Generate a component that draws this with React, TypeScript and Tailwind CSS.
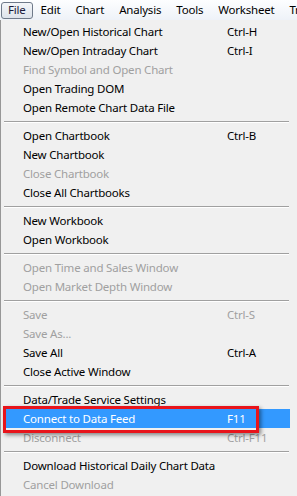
import React from 'react'

type Item = { label: string; shortcut?: string; disabled?: boolean; active?: boolean } | 'sep'

const MENU: Item[] = [
  { label: 'New/Open Historical Chart', shortcut: 'Ctrl-H' },
  { label: 'New/Open Intraday Chart', shortcut: 'Ctrl-I' },
  { label: 'Find Symbol and Open Chart', disabled: true },
  { label: 'Open Trading DOM' },
  { label: 'Open Remote Chart Data File' },
  'sep',
  { label: 'Open Chartbook', shortcut: 'Ctrl-B' },
  { label: 'New Chartbook' },
  { label: 'Close Chartbook', disabled: true },
  { label: 'Close All Chartbooks' },
  'sep',
  { label: 'New Workbook' },
  { label: 'Open Workbook' },
  'sep',
  { label: 'Open Time and Sales Window', disabled: true },
  { label: 'Open Market Depth Window', disabled: true },
  'sep',
  { label: 'Save', shortcut: 'Ctrl-S', disabled: true },
  { label: 'Save As...', disabled: true },
  { label: 'Save All', shortcut: 'Ctrl-A' },
  { label: 'Close Active Window' },
  'sep',
  { label: 'Data/Trade Service Settings' },
  { label: 'Connect to Data Feed', shortcut: 'F11', active: true },
  { label: 'Disconnect', shortcut: 'Ctrl-F11', disabled: true },
  'sep',
  { label: 'Download Historical Daily Chart Data' },
  { label: 'Cancel Download', disabled: true },
]

const BAR = ['File', 'Edit', 'Chart', 'Analysis', 'Tools', 'Worksheet', 'Trade']

export default function App() {
  return (
    <div
      className="relative w-[297px] h-[496px] overflow-hidden bg-[#f0f0f0] text-[11.5px] tracking-[-0.2px] text-black"
      style={{ fontFamily: '"Noto Sans", "Open Sans", sans-serif' }}
    >
      {/* menu bar */}
      <div className="h-[20px] flex items-center pl-[1px] bg-gradient-to-b from-[#fdfeff] to-[#eef2f8] whitespace-nowrap">
        {BAR.map((b, i) => (
          <div
            key={b}
            className={
              'h-[17px] shrink-0 flex items-center px-[6px] mr-[1px] leading-none ' +
              (i === 0 ? 'border border-[#6f7a8a] rounded-[3px] bg-gradient-to-b from-[#f4f6f9] to-[#dde3eb] text-[#1b1b3a]' : 'border border-transparent')
            }
          >
            {b}
          </div>
        ))}
      </div>

      {/* dropdown */}
      <div className="border-l border-[#979797] pt-[2px] h-[476px]">
        {MENU.map((m, i) => {
          if (m === 'sep') {
            return (
              <div key={i} className="h-[9px] flex items-center pl-[3px] pr-[8px]">
                <div className="w-full border-t border-[#a0a0a0] border-b border-b-white" />
              </div>
            )
          }
          return (
            <div
              key={i}
              className={
                'h-[19px] ml-[4px] w-[285px] flex items-center pl-[18px] whitespace-nowrap ' +
                (m.active ? 'bg-[#3399ff] text-white' : m.disabled ? 'text-[#a0a0a0]' : '')
              }
            >
              <span className="w-[204px]">{m.label}</span>
              <span>{m.shortcut}</span>
            </div>
          )
        })}
      </div>

      {/* annotation frame */}
      <div className="absolute left-[3px] top-[406px] w-[256px] h-[27px] border-[3px] border-[#e8141b] shadow-[2px_2px_4px_rgba(0,0,0,0.45)]" />
    </div>
  )
}
